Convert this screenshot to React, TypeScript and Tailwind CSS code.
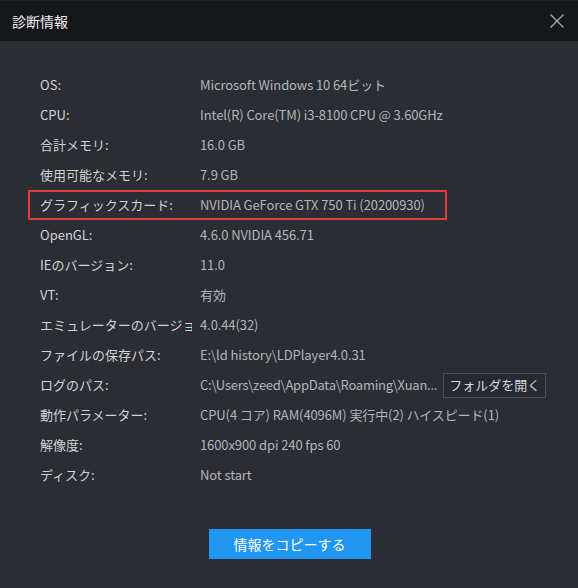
import React from "react";

type Row = {
	label: string;
	value: string;
	highlight?: boolean;
	action?: string;
};

const rows: Row[] = [
	{ label: "OS:", value: "Microsoft Windows 10 64ビット" },
	{ label: "CPU:", value: "Intel(R) Core(TM) i3-8100 CPU @ 3.60GHz" },
	{ label: "合計メモリ:", value: "16.0 GB" },
	{ label: "使用可能なメモリ:", value: "7.9 GB" },
	{ label: "グラフィックスカード:", value: "NVIDIA GeForce GTX 750 Ti (20200930)", highlight: true },
	{ label: "OpenGL:", value: "4.6.0 NVIDIA 456.71" },
	{ label: "IEのバージョン:", value: "11.0" },
	{ label: "VT:", value: "有効" },
	{ label: "エミュレーターのバージョン:", value: "4.0.44(32)" },
	{ label: "ファイルの保存パス:", value: "E:\\ld history\\LDPlayer4.0.31" },
	{ label: "ログのパス:", value: "C:\\Users\\zeed\\AppData\\Roaming\\Xuan...", action: "フォルダを開く" },
	{ label: "動作パラメーター:", value: "CPU(4 コア) RAM(4096M) 実行中(2) ハイスピード(1)" },
	{ label: "解像度:", value: "1600x900 dpi 240 fps 60" },
	{ label: "ディスク:", value: "Not start" },
];

const App: React.FC = () => {
	return (
		<div
			className="flex h-[588px] w-[578px] flex-col bg-[#2a2d33] text-[13px]"
			style={{ fontFamily: '"Noto Sans CJK JP", "Noto Sans", sans-serif' }}
		>
			{/* Title bar */}
			<div className="flex h-[41px] shrink-0 items-center justify-between border-t border-[#202226] bg-[#16171b] pl-3 pr-[12px]">
				<span className="text-[14px] text-[#f0f0f0]">診断情報</span>
				<svg width="16" height="16" viewBox="0 0 16 16" className="mr-[1px]">
					<path d="M1.5 1.5 L14.5 14.5 M14.5 1.5 L1.5 14.5" stroke="#a9abaf" strokeWidth="1.3" />
				</svg>
			</div>

			{/* Info rows */}
			<div className="flex flex-col pt-[29px]">
				{rows.map((row) => (
					<div
						key={row.label}
						className={`flex h-[30px] items-center ${
							row.highlight
								? "ml-[28px] w-[419px] border-2 border-[#e13a3c] pl-[10px]"
								: "pl-[40px]"
						}`}
					>
						<div className="mr-[8px] w-[152px] shrink-0 overflow-hidden whitespace-nowrap text-[#d2d3d5]">
							{row.label}
						</div>
						<div
							className={`whitespace-nowrap text-[#b3b5b8] ${
								row.action ? "tracking-[-0.25px]" : "tracking-[-0.1px]"
							}`}
						>
							{row.value}
						</div>
						{row.action && (
							<button className="ml-[6px] h-[25px] w-[103px] shrink-0 border border-[#4c4f57] bg-[#262930] text-[13px] text-[#d8d9db]">
								{row.action}
							</button>
						)}
					</div>
				))}
			</div>

			{/* Copy button */}
			<div className="flex flex-1 items-start justify-center pt-[39px]">
				<button className="ml-[1px] h-[30px] w-[162px] bg-[#2196f3] text-[14px] text-white">
					情報をコピーする
				</button>
			</div>
		</div>
	);
};

export default App;
